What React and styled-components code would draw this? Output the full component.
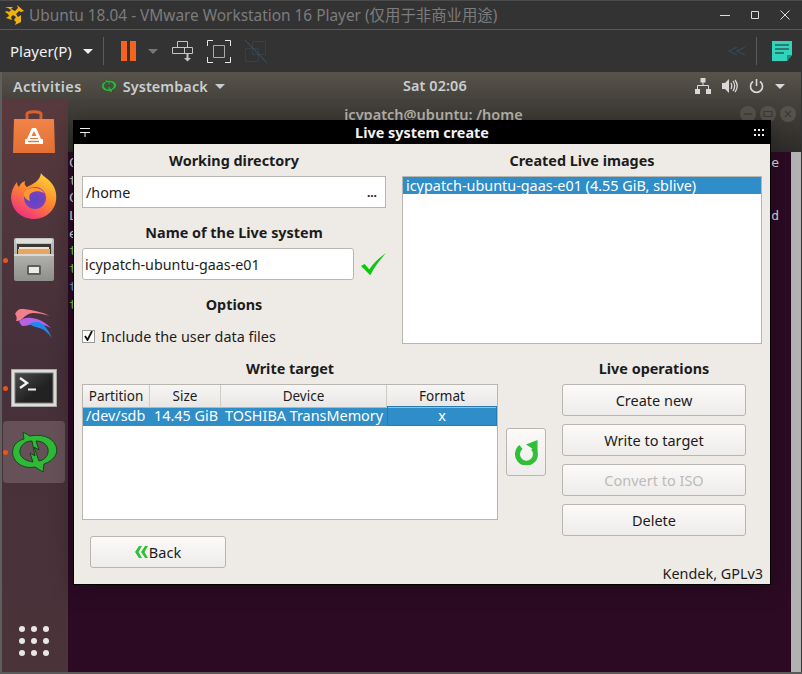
import styled, { createGlobalStyle } from "styled-components";

const GlobalStyle = createGlobalStyle`
  html, body { margin: 0; padding: 0; background: #333; }
  body { font-family: "Noto Sans", "Noto Sans CJK SC", sans-serif; font-size: 14.4px; }
  * { box-sizing: border-box; }
`;

const Frame = styled.div`
  position: relative;
  width: 802px;
  height: 674px;
  display: flex;
  flex-direction: column;
  overflow: hidden;
  background: #333;
  border-bottom: 2px solid #5a5a5a;
`;

const TitleBar = styled.header`
  height: 30px;
  flex: none;
  display: flex;
  align-items: center;
  padding: 0 12px 1px 5px;
  background: #333;
  border-bottom: 1px solid #585858;
  border-top: 1px solid #4c4c4c;
`;

const TitleText = styled.span`
  margin-left: 4px;
  flex: 1;
  font-size: 15.4px;
  color: #7c7c7c;
  white-space: nowrap;
`;

const WindowButtons = styled.div`
  display: flex;
  gap: 20px;
`;

const ToolBar = styled.div`
  height: 42px;
  flex: none;
  display: flex;
  align-items: center;
  padding: 0 10px;
  background: #333;
`;

const PlayerMenu = styled.span`
  color: #f0f0f0;
  font-size: 15px;
  width: 73px;
`;

const Divider = styled.i`
  display: block;
  width: 1px;
  height: 28px;
  background: #5c5c5c;
  margin: ${({ $margin }) => $margin};
`;

const Caret = styled.i`
  display: block;
  width: 0;
  height: 0;
  border-left: 5px solid transparent;
  border-right: 5px solid transparent;
  border-top: 5px solid ${({ $color }) => $color || "#eee"};
  margin: ${({ $margin }) => $margin || 0};
`;

const Pause = styled.div`
  display: flex;
  gap: 3px;
  & > i {
    display: block;
    width: 6px;
    height: 20px;
    background: #f5641e;
  }
`;

const ToolIcons = styled.div`
  display: flex;
  align-items: center;
  gap: 13px;
  margin-left: 14px;
  flex: 1;
`;

const Guest = styled.div`
  flex: 1;
  min-height: 0;
  display: flex;
  flex-direction: column;
  border-left: 2px solid #5f5f5f;
  margin-right: 1px;
`;

const Panel = styled.div`
  height: 28px;
  flex: none;
  display: flex;
  align-items: center;
  position: relative;
  padding: 0 16px 0 11px;
  background: linear-gradient(#58544c, #45423c);
  color: #c9ced2;
  font-size: 14.4px;
  font-weight: 600;
  letter-spacing: 0.1px;
`;

const ActivitiesLabel = styled.span`
  letter-spacing: 0.45px;
`;

const PanelApp = styled.span`
  display: flex;
  align-items: center;
  margin-left: 19px;
  gap: 6px;
`;

const Clock = styled.span`
  position: absolute;
  left: 401px;
  top: 4px;
`;

const Tray = styled.div`
  margin-left: auto;
  display: flex;
  align-items: center;
  gap: 11px;
`;

const Desk = styled.div`
  flex: 1;
  min-height: 0;
  display: flex;
`;

const Dock = styled.nav`
  width: 66px;
  flex: none;
  display: flex;
  flex-direction: column;
  background: linear-gradient(#583a3e, #46303a 45%, #4b3339);
`;

const DockItem = styled.div`
  position: relative;
  height: 64px;
  flex: none;
  margin: 0 3px 0 1px;
  display: flex;
  align-items: center;
  justify-content: center;
  ${({ $active }) =>
    $active &&
    `&::before {
      content: "";
      position: absolute;
      inset: 1px 0;
      background: #675159;
      border-radius: 4px;
    }
    & > svg { position: relative; }`}
`;

const RunDot = styled.i`
  position: absolute;
  left: 0;
  top: 50%;
  width: 5px;
  height: 5px;
  margin-top: -2px;
  border-radius: 50%;
  background: #e9541f;
  z-index: 1;
`;

const AppGrid = styled.div`
  margin: auto 0 16px 17px;
  display: grid;
  grid-template-columns: repeat(3, 6px);
  gap: 6px;
  & > i {
    display: block;
    width: 6px;
    height: 6px;
    border-radius: 50%;
    background: #e9e7e6;
  }
`;

const TerminalWindow = styled.div`
  flex: 1;
  min-width: 0;
  display: flex;
  flex-direction: column;
`;

const TerminalTitle = styled.div`
  height: 52px;
  flex: none;
  position: relative;
  padding-top: 4px;
  padding-right: 2px;
  text-align: center;
  background: linear-gradient(#45423c, #2e2c28);
  color: #b9b6ae;
  font-size: 14.5px;
  font-weight: 600;
`;

const TerminalButtons = styled.div`
  position: absolute;
  right: 5px;
  top: 6px;
  display: flex;
  gap: 4px;
`;

const RoundButton = styled.span`
  width: 16px;
  height: 16px;
  border-radius: 50%;
  background: #55524c;
  display: flex;
  align-items: center;
  justify-content: center;
`;

const TerminalRow = styled.div`
  flex: 1;
  min-height: 0;
  display: flex;
`;

const TerminalBody = styled.div`
  flex: 1;
  padding: 2px 12px 0 1px;
  background: #2c0a24;
  font-family: "DejaVu Sans Mono", monospace;
  font-size: 13px;
  line-height: 17.7px;
`;

const TerminalLine = styled.div`
  height: 17.7px;
  display: flex;
  justify-content: space-between;
  color: ${({ $color }) => $color || "#d8d8d8"};
`;

const RightStrip = styled.div`
  width: 10px;
  flex: none;
  background: #b2b2b2;
`;

const Dialog = styled.section`
  position: absolute;
  left: 73px;
  top: 120px;
  width: 698px;
  height: 465px;
  background: #eeebe7;
  border: 1px solid #000;
  border-top: 0;
  box-shadow: 0 4px 22px rgba(0, 0, 0, 0.3);
  color: #1c1c1c;
  display: flex;
  flex-direction: column;
`;

const DialogBar = styled.div`
  height: 24px;
  flex: none;
  background: #000;
  color: #f2f2f2;
  font-size: 14.4px;
  font-weight: 700;
  display: grid;
  grid-template-columns: 1fr auto 1fr;
  align-items: center;
  padding: 0 6px;
`;

const DotsIcon = styled.div`
  justify-self: end;
  display: grid;
  grid-template-columns: repeat(3, 2px);
  gap: 3px 2px;
  & > i {
    display: block;
    width: 2px;
    height: 2px;
    background: #eee;
  }
`;

const TopArea = styled.div`
  display: flex;
  padding: 0 8px;
  gap: 16px;
  height: 208px;
  flex: none;
`;

const LeftColumn = styled.div`
  width: 304px;
  flex: none;
`;

const RightColumn = styled.div`
  width: 360px;
  flex: none;
  display: flex;
  flex-direction: column;
`;

const Heading = styled.h4`
  margin: 0;
  height: 32px;
  line-height: 34px;
  font-size: 14.4px;
  font-weight: 700;
  text-align: center;
  white-space: nowrap;
`;

const Field = styled.div`
  height: 32px;
  display: flex;
  align-items: center;
  justify-content: space-between;
  background: #fff;
  border: 1px solid #b9b6b1;
  border-radius: ${({ $round }) => ($round ? "3px" : "0")};
  padding: 0 ${({ $round }) => ($round ? "2px" : "3px")};
  font-size: 14.3px;
  width: ${({ $width }) => $width};
  flex: none;
`;

const Ellipsis = styled.span`
  font-weight: 700;
  font-size: 12px;
  margin-right: 5px;
`;

const NameRow = styled.div`
  display: flex;
  align-items: center;
  gap: 7px;
`;

const SubHeading = styled(Heading)`
  height: 40px;
  line-height: 50px;
`;

const OptionsHeading = styled(Heading)`
  height: 34px;
  line-height: 50px;
`;

const CheckRow = styled.label`
  margin-top: 12px;
  display: flex;
  align-items: center;
  gap: 6px;
  font-size: 14.4px;
  height: 20px;
`;

const CheckBox = styled.span`
  width: 13px;
  height: 13px;
  background: #fff;
  border: 1px solid #9c9a96;
  display: flex;
  align-items: center;
  justify-content: center;
`;

const ImageList = styled.div`
  height: 168px;
  background: #fff;
  border: 1px solid #b9b6b1;
`;

const SelectedLine = styled.div`
  height: 17px;
  padding-left: 3px;
  background: #2f8dc8;
  color: #fff;
  font-size: 14.4px;
  line-height: 17px;
  white-space: nowrap;
`;

const BottomArea = styled.div`
  display: flex;
  align-items: flex-start;
  padding: 0 0 0 8px;
  height: 176px;
  flex: none;
`;

const TableColumn = styled.div`
  width: 416px;
  flex: none;
`;

const Table = styled.div`
  height: 136px;
  background: #fff;
  border: 1px solid #b9b6b1;
`;

const TableRow = styled.div`
  display: grid;
  grid-template-columns: 67px 71px 166px 1fr;
  height: ${({ $h }) => $h}px;
  ${({ $selected }) => $selected && "background: #2f8dc8; color: #fff;"}
`;

const HeaderCell = styled.div`
  text-align: center;
  font-size: 13.5px;
  line-height: 22px;
  background: linear-gradient(#f7f6f5, #e9e7e4);
  border-right: 1px solid #cfccc7;
  border-bottom: 1px solid #b9b6b1;
  &:last-child {
    border-right: 0;
  }
`;

const Cell = styled.div`
  font-size: 14.4px;
  line-height: 20px;
  white-space: nowrap;
  padding-left: ${({ $pad }) => $pad || 3}px;
  ${({ $center }) => $center && "text-align: center; padding: 0; outline: 1px solid #2a7cb0; outline-offset: -1px;"}
`;

const RefreshButton = styled.button`
  width: 40px;
  height: 48px;
  margin: 76px 0 0 8px;
  padding: 0;
  flex: none;
  display: flex;
  align-items: center;
  justify-content: center;
  background: linear-gradient(#fbfaf9, #eeecea);
  border: 1px solid #b9b6b1;
  border-radius: 3px;
`;

const OpsColumn = styled.div`
  width: 184px;
  flex: none;
  margin-left: 16px;
  display: flex;
  flex-direction: column;
  gap: 8px;
`;

const OpsHeading = styled(Heading)`
  margin-bottom: -8px;
`;

const Button = styled.button`
  height: 32px;
  width: ${({ $width }) => $width || "100%"};
  display: flex;
  align-items: center;
  justify-content: center;
  gap: 1px;
  padding: 0;
  flex: none;
  font-family: inherit;
  font-size: 14.5px;
  color: ${({ disabled }) => (disabled ? "#bdbbb8" : "#1c1c1c")};
  background: linear-gradient(#fbfaf9, #eeecea);
  border: 1px solid #b9b6b1;
  border-radius: 3px;
`;

const Footer = styled.div`
  position: relative;
  padding: 8px 0 0 16px;
  flex: 1;
`;

const Credit = styled.span`
  position: absolute;
  right: 7px;
  bottom: 1px;
  font-size: 14.4px;
`;

function Logo() {
  return (
    <svg width="20" height="22" viewBox="0 0 20 22" fill="#f0b010">
      <path d="M0 3h8l-2 2 4 2 3-3-1-3 7 6-3 1-2-1-3 3 2 3 3-2v7l-6 3 1-3-2-2 2-3-3-2-2 2 1 3-6-2 3-2-1-2-3-2 2-1 2 1 2-2-3-2z" />
    </svg>
  );
}

function WinMin() {
  return (
    <svg width="10" height="10" viewBox="0 0 10 10" stroke="#ddd" fill="none">
      <path d="M0 5.5h10" />
    </svg>
  );
}

function WinMax() {
  return (
    <svg width="10" height="10" viewBox="0 0 10 10" stroke="#ddd" fill="none">
      <path d="M1.5 1.5h7v7h-7z" />
    </svg>
  );
}

function WinClose() {
  return (
    <svg width="10" height="10" viewBox="0 0 10 10" stroke="#ddd" fill="none">
      <path d="M0.5 0.5l9 9M9.5 0.5l-9 9" />
    </svg>
  );
}

function SendKeys() {
  return (
    <svg width="22" height="23" viewBox="0 0 22 23" fill="none" stroke="#c4c4c4">
      <path d="M5.5 1.5h10v6h-10zM.5 7.5h20v6H.5zM12.5 7.5v6" />
      <path d="M15.5 14v4" strokeWidth="2" />
      <path d="M12 18h7l-3.5 3.5z" fill="#c4c4c4" stroke="none" />
    </svg>
  );
}

function FullScreen() {
  return (
    <svg width="24" height="23" viewBox="0 0 24 23" fill="none" stroke="#e8e8e8">
      <path d="M.5 6V.5H6M18 .5h5.5V6M23.5 17v5.5H18M6 22.5H.5V17" />
      <path d="M6.5 5.5h11v12h-11z" stroke="#aaa" />
    </svg>
  );
}

function UnitySwitch() {
  return (
    <svg width="24" height="23" viewBox="0 0 24 23" fill="none" stroke="#34404a">
      <path d="M8.5 1.5h13v13h-13zM1.5 8.5h13v13h-13z" />
      <path d="M1 0l22 23" stroke="#47525c" />
    </svg>
  );
}

function BackChevrons() {
  return (
    <svg width="18" height="10" viewBox="0 0 18 10" fill="none" stroke="#37475a" strokeWidth="1.3">
      <path d="M9 1L1 5l8 4M17 1L9 5l8 4" />
    </svg>
  );
}

function NoteIcon() {
  return (
    <svg width="20" height="20" viewBox="0 0 20 20">
      <path d="M0 0h20v14l-5 6H0z" fill="#2fd4bb" />
      <path d="M15 20v-6h5z" fill="#1a8f80" />
      <path d="M3 4h14M3 8h14M3 12h9" stroke="#2a5d58" strokeWidth="1.4" />
    </svg>
  );
}

function SyncRing({ width, height }) {
  return (
    <svg width={width} height={height} viewBox="3 3 47 42">
      <path
        fillRule="evenodd"
        d="M15 4l7 4c10-2 22 0 26 10 3 8-3 15-12 18l-1 8-8-5c-9 2-19-2-22-11C3 19 8 13 16 11zM24 13c-8 0-13 6-12 12 1 5 6 8 13 9l-3-9 5 3zM28 13l3 9-5-3 5 14c6-1 10-6 9-12-1-5-6-8-12-8z"
        fill="#30b838"
        stroke="#103f14"
        strokeWidth="0.9"
      />
    </svg>
  );
}

function NetworkIcon() {
  return (
    <svg width="16" height="16" viewBox="0 0 16 16" fill="#d8d8d8">
      <path d="M5.5 0h5v4.5h-5zM0 11h5v5H0zM11 11h5v5h-5z" />
      <path d="M8 4v4M2.5 11V7.5h11V11" stroke="#d8d8d8" fill="none" />
    </svg>
  );
}

function VolumeIcon() {
  return (
    <svg width="16" height="16" viewBox="0 0 16 16" fill="none" stroke="#d8d8d8" strokeWidth="1.3">
      <path d="M0 5h3l4-4v14l-4-4H0z" fill="#d8d8d8" stroke="none" />
      <path d="M9 5c1 2 1 4 0 6M11 3c2 3 2 7 0 10M13 2c3 4 3 8 0 12" />
    </svg>
  );
}

function PowerIcon() {
  return (
    <svg width="15" height="15" viewBox="0 0 15 15" fill="none" stroke="#d8d8d8" strokeWidth="1.6">
      <path d="M7.5 0v7M4 2.5a6 6 0 1 0 7 0" />
    </svg>
  );
}

function MinGlyph() {
  return (
    <svg width="10" height="10" viewBox="0 0 10 10" stroke="#3d3b37" strokeWidth="1.4" fill="none">
      <path d="M1 5h8" />
    </svg>
  );
}

function MaxGlyph() {
  return (
    <svg width="10" height="10" viewBox="0 0 10 10" stroke="#3d3b37" strokeWidth="1.2" fill="none">
      <path d="M1 2.5h8v5H1z" />
    </svg>
  );
}

function CloseGlyph() {
  return (
    <svg width="10" height="10" viewBox="0 0 10 10" stroke="#3d3b37" strokeWidth="1.4" fill="none">
      <path d="M2 2l6 6M8 2l-6 6" />
    </svg>
  );
}

function StoreIcon() {
  return (
    <svg width="42" height="44" viewBox="0 0 42 44">
      <defs>
        <linearGradient id="bag" x1="0" y1="0" x2="0" y2="1">
          <stop offset="0" stopColor="#f08448" />
          <stop offset="1" stopColor="#e56f35" />
        </linearGradient>
      </defs>
      <path d="M14 9V4c0-3 14-3 14 0v5" fill="none" stroke="#d9612c" strokeWidth="3" />
      <path d="M1 9h40l1 34H0z" fill="url(#bag)" />
      <path fillRule="evenodd" d="M19 18h4l6 13h-3l-1-3h-8l-1 3h-3zM21 21l-2.5 5h5z" fill="#fff" />
      <path d="M12 29h18v5H12z" fill="#fff" />
      <path d="M15 31.5h11" stroke="#e8743a" strokeWidth="1.4" />
    </svg>
  );
}

function FirefoxIcon() {
  return (
    <svg width="46" height="46" viewBox="0 0 46 46">
      <defs>
        <linearGradient id="ff" x1="0.8" y1="0" x2="0.2" y2="1">
          <stop offset="0" stopColor="#ffd93b" />
          <stop offset="0.45" stopColor="#ff8a2b" />
          <stop offset="1" stopColor="#f0268a" />
        </linearGradient>
        <radialGradient id="ffc" cx="0.5" cy="0.6" r="0.6">
          <stop offset="0" stopColor="#5b45c8" />
          <stop offset="1" stopColor="#8a3fb8" />
        </radialGradient>
      </defs>
      <path
        d="M30 0c2 4 9 6 13 14 3 6 3 14 0 20-4 8-12 12-20 12C10 46 1 37 0 25c0-6 2-11 6-16 0 3 1 4 2 5 1-3 3-5 6-6-1 3 0 5 2 6 6-3 13-6 14-14z"
        fill="url(#ff)"
      />
      <circle cx="24" cy="25" r="11" fill="url(#ffc)" />
      <path d="M13 20c2-4 9-7 16-4 2 1 3 2 4 4-6-3-11-2-14 1-1 2-1 5 0 7-3-1-7-4-6-8z" fill="#ff9a2a" />
    </svg>
  );
}

function CabinetIcon() {
  return (
    <svg width="42" height="44" viewBox="0 0 42 44">
      <defs>
        <linearGradient id="cab" x1="0" y1="0" x2="0" y2="1">
          <stop offset="0" stopColor="#c6c6c3" />
          <stop offset="1" stopColor="#8f8f8b" />
        </linearGradient>
      </defs>
      <rect x="1" y="0" width="40" height="43" rx="2" fill="url(#cab)" />
      <path d="M3 1h36v4H3z" fill="#dededa" />
      <path d="M4 6h34v12H4z" fill="#3a3836" />
      <path d="M6 9h30v2H6z" fill="#f4e2c8" />
      <path d="M5 11h32v5H5z" fill="#e9a565" />
      <path d="M1 17h40" stroke="#d8d8d4" strokeWidth="2" />
      <rect x="14" y="27" width="14" height="10" rx="1.5" fill="#5e5e5a" />
      <path d="M16 29h10v6H16z" fill="#ecebe8" />
    </svg>
  );
}

function DragonIcon() {
  return (
    <svg width="38" height="30" viewBox="0 0 38 30">
      <path d="M0 5C2 1 5-1 9 0c9 1 18 3 26 7-6-2-12-3-17-3-4 0-8 3-11 6-2 2-5 2-6 2 1-2 1-5-1-7z" fill="#f27f8f" />
      <path d="M4 12c4-3 8-4 13-3 8 1 14 5 19 10-6-3-11-4-16-4-4 0-8 2-12 2-2 0-3-3-4-5z" fill="#b562e6" />
      <path d="M14 15c3-2 7-2 10-2 6 3 10 9 13 16-4-5-8-9-13-10-3-1-7-2-10-4z" fill="#1e88f0" />
    </svg>
  );
}

function TerminalIcon() {
  return (
    <svg width="46" height="38" viewBox="0 0 46 38">
      <defs>
        <linearGradient id="term" x1="0" y1="0" x2="1" y2="1">
          <stop offset="0" stopColor="#4c4c4c" />
          <stop offset="0.6" stopColor="#222" />
        </linearGradient>
      </defs>
      <rect x="0.5" y="0.5" width="45" height="37" fill="#dededa" stroke="#a8a8a4" />
      <rect x="4" y="4" width="38" height="30" fill="url(#term)" stroke="#777" />
      <path d="M9 9l7 5-7 5" fill="none" stroke="#f2f2f2" strokeWidth="2.4" />
      <path d="M17 20.5h8" stroke="#f2f2f2" strokeWidth="2" />
    </svg>
  );
}

function MenuGlyph() {
  return (
    <svg width="11" height="9" viewBox="0 0 11 9" stroke="#eee" fill="none">
      <path d="M0 .5h10M0 4.5h10M5 4.5V9" />
    </svg>
  );
}

function CheckMark() {
  return (
    <svg width="27" height="25" viewBox="0 0 27 25">
      <path d="M0 14l4-2 5 6C13 11 20 5 27 0 20 8 14 16 10 24z" fill="#0cc80c" />
    </svg>
  );
}

function GreenBack() {
  return (
    <svg width="13" height="12" viewBox="0 0 13 12" fill="#30c037">
      <path d="M4 0h3L3.5 6 7 12H4L0 6zM10 0h3L9.5 6l3.5 6h-3L6 6z" />
    </svg>
  );
}

function RefreshIcon() {
  return (
    <svg width="24" height="26" viewBox="0 0 24 26" fill="none">
      <path d="M7 8a9 9 0 1 0 12 1" stroke="#30c037" strokeWidth="5" />
      <path d="M23.5 1v12L12 5.5z" fill="#30c037" />
    </svg>
  );
}

const dockApps = [
  { id: "store", icon: <StoreIcon /> },
  { id: "firefox", icon: <FirefoxIcon /> },
  { id: "files", icon: <CabinetIcon />, running: true },
  { id: "dragon", icon: <DragonIcon /> },
  { id: "terminal", icon: <TerminalIcon />, running: true },
  { id: "systemback", icon: <SyncRing width={47} height={42} />, running: true, active: true },
];

const terminalLines = [
  { left: "C", right: "e" },
  { left: "t" },
  { left: "C" },
  { left: "L", right: "d" },
  { left: "e" },
  { left: "t", color: "#7fd13b" },
  { left: "t", color: "#7fd13b" },
  { left: "t", color: "#5a9fe0" },
  { left: "t", color: "#7fd13b" },
];

const operations = [
  { label: "Create new" },
  { label: "Write to target" },
  { label: "Convert to ISO", disabled: true },
  { label: "Delete" },
];

export default function App() {
  return (
    <Frame>
      <GlobalStyle />
      <TitleBar>
        <Logo />
        <TitleText>Ubuntu 18.04 - VMware Workstation 16 Player (仅用于非商业用途)</TitleText>
        <WindowButtons>
          <WinMin />
          <WinMax />
          <WinClose />
        </WindowButtons>
      </TitleBar>
      <ToolBar>
        <PlayerMenu>Player(P)</PlayerMenu>
        <Caret />
        <Divider $margin="0 17px 0 10px" />
        <Pause>
          <i />
          <i />
        </Pause>
        <Caret $color="#777" $margin="0 0 0 12px" />
        <ToolIcons>
          <SendKeys />
          <FullScreen />
          <UnitySwitch />
        </ToolIcons>
        <BackChevrons />
        <Divider $margin="0 15px 0 10px" />
        <NoteIcon />
      </ToolBar>
      <Guest>
        <Panel>
          <ActivitiesLabel>Activities</ActivitiesLabel>
          <PanelApp>
            <SyncRing width={16} height={14} />
            <span>Systemback</span>
            <Caret $color="#c9ced2" $margin="0 0 0 1px" />
          </PanelApp>
          <Clock>Sat 02:06</Clock>
          <Tray>
            <NetworkIcon />
            <VolumeIcon />
            <PowerIcon />
            <Caret $color="#d8d8d8" />
          </Tray>
        </Panel>
        <Desk>
          <Dock>
            {dockApps.map((app) => (
              <DockItem key={app.id} $active={app.active}>
                {app.running && <RunDot />}
                {app.icon}
              </DockItem>
            ))}
            <AppGrid>
              {Array.from({ length: 9 }, (_, i) => (
                <i key={i} />
              ))}
            </AppGrid>
          </Dock>
          <TerminalWindow>
            <TerminalTitle>
              icypatch@ubuntu: /home
              <TerminalButtons>
                <RoundButton>
                  <MinGlyph />
                </RoundButton>
                <RoundButton>
                  <MaxGlyph />
                </RoundButton>
                <RoundButton>
                  <CloseGlyph />
                </RoundButton>
              </TerminalButtons>
            </TerminalTitle>
            <TerminalRow>
              <TerminalBody>
                {terminalLines.map((line, i) => (
                  <TerminalLine key={i} $color={line.color}>
                    <span>{line.left}</span>
                    <span>{line.right}</span>
                  </TerminalLine>
                ))}
              </TerminalBody>
              <RightStrip />
            </TerminalRow>
          </TerminalWindow>
        </Desk>
      </Guest>
      <Dialog>
        <DialogBar>
          <MenuGlyph />
          <span>Live system create</span>
          <DotsIcon>
            {Array.from({ length: 6 }, (_, i) => (
              <i key={i} />
            ))}
          </DotsIcon>
        </DialogBar>
        <TopArea>
          <LeftColumn>
            <Heading>Working directory</Heading>
            <Field>
              /home
              <Ellipsis>...</Ellipsis>
            </Field>
            <SubHeading>Name of the Live system</SubHeading>
            <NameRow>
              <Field $round $width="272px">
                icypatch-ubuntu-gaas-e01
              </Field>
              <CheckMark />
            </NameRow>
            <OptionsHeading>Options</OptionsHeading>
            <CheckRow>
              <CheckBox>
                <svg width="9" height="10" viewBox="0 0 9 10" fill="none" stroke="#111" strokeWidth="1.8">
                  <path d="M1 5l2.5 4L8 0" />
                </svg>
              </CheckBox>
              Include the user data files
            </CheckRow>
          </LeftColumn>
          <RightColumn>
            <Heading>Created Live images</Heading>
            <ImageList>
              <SelectedLine>icypatch-ubuntu-gaas-e01 (4.55 GiB, sblive)</SelectedLine>
            </ImageList>
          </RightColumn>
        </TopArea>
        <BottomArea>
          <TableColumn>
            <Heading>Write target</Heading>
            <Table>
              <TableRow $h={21}>
                <HeaderCell>Partition</HeaderCell>
                <HeaderCell>Size</HeaderCell>
                <HeaderCell>Device</HeaderCell>
                <HeaderCell>Format</HeaderCell>
              </TableRow>
              <TableRow $h={20} $selected>
                <Cell>/dev/sdb</Cell>
                <Cell $pad={4}>14.45 GiB</Cell>
                <Cell $pad={4}>TOSHIBA TransMemory</Cell>
                <Cell $center>x</Cell>
              </TableRow>
            </Table>
          </TableColumn>
          <RefreshButton>
            <RefreshIcon />
          </RefreshButton>
          <OpsColumn>
            <OpsHeading>Live operations</OpsHeading>
            {operations.map((op) => (
              <Button key={op.label} disabled={op.disabled}>
                {op.label}
              </Button>
            ))}
          </OpsColumn>
        </BottomArea>
        <Footer>
          <Button $width="136px">
            <GreenBack />
            Back
          </Button>
          <Credit>Kendek, GPLv3</Credit>
        </Footer>
      </Dialog>
    </Frame>
  );
}
